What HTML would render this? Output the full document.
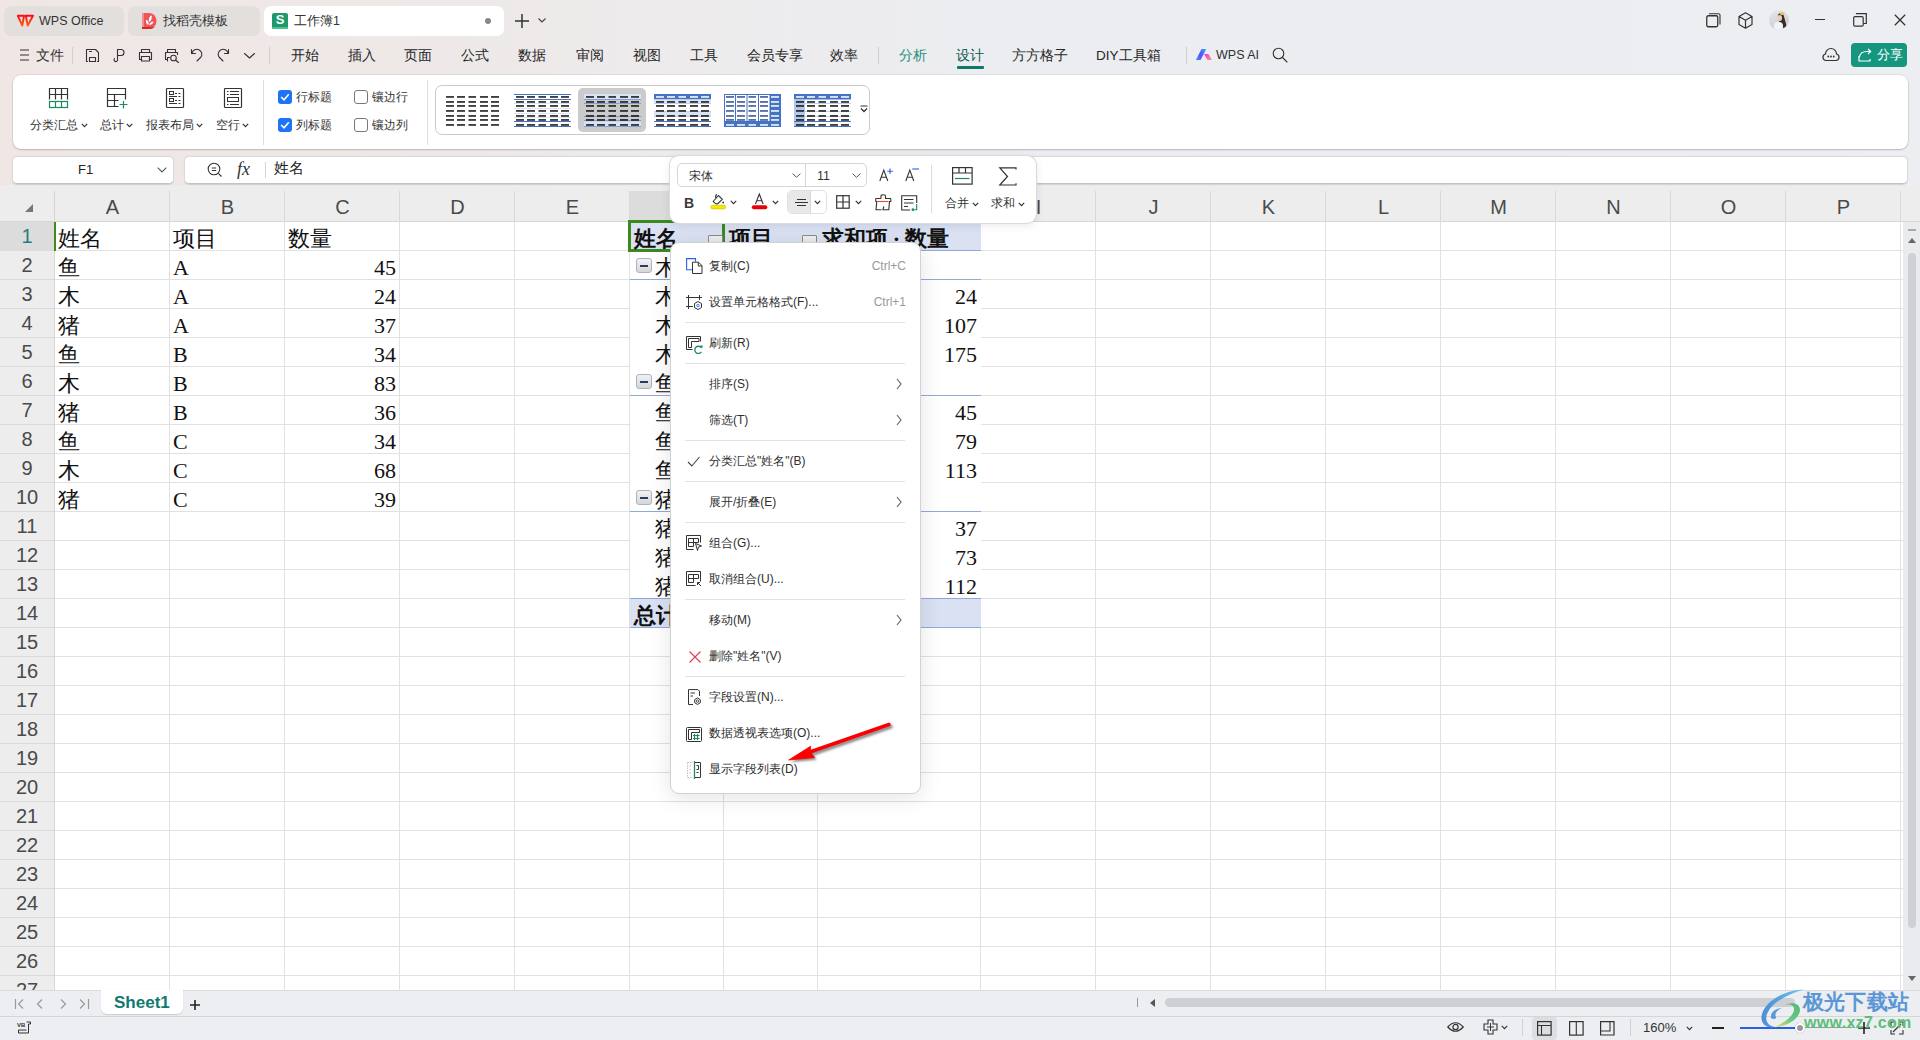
<!DOCTYPE html><html><head><meta charset="utf-8"><style>
*{box-sizing:border-box;margin:0;padding:0}
html,body{width:1920px;height:1040px;overflow:hidden}
body{position:relative;font-family:"Liberation Sans",sans-serif;color:#222;background:#eceef2}
.a{position:absolute}
svg{position:absolute;overflow:visible}
#top{left:0;top:0;width:1920px;height:185px;background:linear-gradient(90deg,#f0e7e5 0%,#eee8e7 20%,#edebec 35%,#ecedf0 50%,#eceef2 100%)}
.tab{position:absolute;top:6px;height:30px;border-radius:7px;background:#e2dfdd}
.tab.act{background:#fff}
.t{position:absolute;white-space:nowrap}
.mi{position:absolute;top:46px;font-size:13.5px;line-height:20px;color:#303030;white-space:nowrap}
#ribbon{left:13px;top:75px;width:1895px;height:74px;background:#fff;border-radius:8px;box-shadow:0 0 0 0.5px rgba(0,0,0,.12),0 1px 2px rgba(0,0,0,.18)}
.rl{position:absolute;font-size:12px;color:#333;white-space:nowrap;line-height:16px}
.box{position:absolute;background:#fff;border:1px solid #dadada;border-bottom-color:#c4c4c4;border-radius:5px;box-shadow:0 0.5px 1px rgba(0,0,0,.12)}
#grid{left:0;top:191px;width:1920px;height:799px;background:#fff;overflow:hidden}
.cell{position:absolute;font-family:"Liberation Serif",serif;font-size:22px;color:#111;line-height:29px;white-space:nowrap;padding-top:2px}
#menu{left:670px;top:242px;width:251px;height:552px;background:#fff;border-radius:9px;box-shadow:0 4px 22px rgba(0,0,0,.11);border:1px solid #d2d2d2}
.cm{position:absolute;left:38px;font-size:12px;color:#2e2e2e;white-space:nowrap;line-height:16px}
.sc{position:absolute;right:14px;font-size:12px;color:#999;white-space:nowrap;line-height:16px}
.sep{position:absolute;left:14px;width:220px;height:1px;background:#e3e3e3}
#ftb{left:670px;top:156px;width:366px;height:67px;background:#fff;border-radius:9px;box-shadow:0 0 0 1px #dadada,0 2px 10px rgba(0,0,0,.10)}
</style></head><body>
<div id="top" class="a"></div><div class="a" style="left:0;top:185px;width:1920px;height:6px;background:#ededed"></div>
<div class="tab" style="left:4px;width:120px"></div><div class="tab" style="left:128px;width:132px"></div><div class="tab act" style="left:264px;width:240px"></div><svg style="left:16px;top:14px" width="19" height="13" viewBox="0 0 19 13"><defs><linearGradient id="wl" x1="0" y1="0" x2="0" y2="1"><stop offset="0" stop-color="#ff0a14"/><stop offset="1" stop-color="#ff5a0a"/></linearGradient></defs><path d="M1.8 1.8H8L6.3 11.6Z M9.8 1.8H17L11.7 11.6Z" fill="none" stroke="url(#wl)" stroke-width="1.9" stroke-linejoin="round"/></svg><div class="t" style="left:39px;top:12px;font-size:12.5px;line-height:18px;color:#333">WPS Office</div><svg style="left:142px;top:13px" width="15" height="16" viewBox="0 0 15 16"><path d="M0 0H7A7.5 8 0 0 1 7 16H0Z" fill="#ef5459"/><rect x="0" y="0" width="2" height="16" fill="#f58a8d"/><path d="M0 14H12.6Q11 16 7 16H0Z" fill="#dc2626"/><ellipse cx="8.3" cy="5.6" rx="1.2" ry="3.3" transform="rotate(15 8.3 5.6)" fill="#fff"/><ellipse cx="5.3" cy="9.4" rx="1.1" ry="2.5" transform="rotate(-20 5.3 9.4)" fill="#fff"/><ellipse cx="9.3" cy="10.3" rx="1" ry="2.4" transform="rotate(55 9.3 10.3)" fill="#fff"/></svg><div class="t" style="left:163px;top:12px;font-size:12.5px;line-height:18px;color:#333">找稻壳模板</div><div class="a" style="left:272px;top:13px;width:16px;height:16px;border-radius:2px;background:#1d9a6c"></div><div class="a" style="left:272px;top:27px;width:16px;height:2px;background:#4cbf8d"></div><div class="t" style="left:272px;top:12px;width:16px;text-align:center;font-size:13px;line-height:16px;color:#fff;font-weight:bold">S</div><div class="t" style="left:294px;top:12px;font-size:12.5px;line-height:18px;color:#333">工作簿1</div><div class="a" style="left:485px;top:18px;width:6px;height:6px;border-radius:3px;background:#888"></div><svg style="left:515px;top:14px" width="14" height="14"><path d="M7 0V14M0 7H14" stroke="#333" stroke-width="1.5"/></svg><svg style="left:538px;top:18px" width="8" height="5"><path d="M0.5 0.5L4 4L7.5 0.5" stroke="#444" stroke-width="1.2" fill="none"/></svg><svg style="left:1706px;top:13px" width="15" height="15"><rect x="0.75" y="2.75" width="11" height="11" rx="1.5" fill="none" stroke="#333" stroke-width="1.3"/><path d="M3 0.75H12.5A1.5 1.5 0 0 1 14 2.25V11.5" fill="none" stroke="#333" stroke-width="1.1"/></svg><svg style="left:1738px;top:12px" width="15" height="17" viewBox="0 0 15 17"><path d="M7.5 0.8L14 4.5V12.5L7.5 16.2L1 12.5V4.5Z M1 4.5L7.5 8.3L14 4.5 M7.5 8.3V16.2" fill="none" stroke="#333" stroke-width="1.2" stroke-linejoin="round"/></svg><div class="a" style="left:1769px;top:10px;width:20px;height:20px;border-radius:10px;overflow:hidden;background:linear-gradient(160deg,#e4e8ea 0%,#cfd6da 60%,#bfc8cc 100%)"><div class="a" style="left:10px;top:3px;width:6px;height:15px;border-radius:3px;background:#3b2b26;transform:rotate(-15deg)"></div><div class="a" style="left:8px;top:5px;width:5px;height:6px;border-radius:3px;background:#e9cdbd"></div><div class="a" style="left:11px;top:2px;width:4px;height:3px;border-radius:2px;background:#e6c25a"></div><div class="a" style="left:5px;top:12px;width:9px;height:9px;border-radius:4px;background:#f1f3f4"></div></div><div class="a" style="left:1815px;top:19px;width:10px;height:1.3px;background:#333"></div><svg style="left:1853px;top:13px" width="14" height="14"><rect x="0.7" y="3.7" width="9.5" height="9.5" rx="1.2" fill="none" stroke="#333" stroke-width="1.2"/><path d="M3.5 1.3V0.7H13.3V10.5H10.5" fill="none" stroke="#333" stroke-width="1.2"/></svg><svg style="left:1894px;top:14px" width="12" height="12"><path d="M0.8 0.8L11.2 11.2M11.2 0.8L0.8 11.2" stroke="#333" stroke-width="1.3"/></svg><svg style="left:20px;top:49px" width="9" height="12"><path d="M0 1H9M0 6H9M0 11H9" stroke="#333" stroke-width="1.2"/></svg><div class="mi" style="left:36px">文件</div><div class="a" style="left:72px;top:47px;width:1px;height:17px;background:#cfcfcf"></div><div class="a" style="left:269px;top:47px;width:1px;height:17px;background:#cfcfcf"></div><div class="a" style="left:878px;top:47px;width:1px;height:17px;background:#cfcfcf"></div><div class="a" style="left:1186px;top:47px;width:1px;height:17px;background:#cfcfcf"></div><svg style="left:85px;top:48px" width="15" height="14" viewBox="0 0 15 14"><path d="M2.5 13.5H1.5V1.5H10.5L13.5 4.5V13.5H12.5" fill="none" stroke="#333" stroke-width="1.1" stroke-linejoin="round" stroke-linecap="round"/><path d="M4.5 3.5H6.5" fill="none" stroke="#333" stroke-width="1.1" stroke-linejoin="round" stroke-linecap="round"/><rect x="4.5" y="9.5" width="6" height="4" fill="none" stroke="#333" stroke-width="1.1" stroke-linejoin="round" stroke-linecap="round"/></svg><svg style="left:112px;top:48px" width="14" height="14" viewBox="0 0 14 14"><path d="M5.5 7.5H9A3 3 0 0 0 9 1.5H5.5V11A1.8 1.8 0 1 1 2.5 10.5" fill="none" stroke="#333" stroke-width="1.1" stroke-linejoin="round" stroke-linecap="round"/></svg><svg style="left:138px;top:48px" width="15" height="14" viewBox="0 0 15 14"><path d="M3.5 4V1.5H11.5V4 M3.5 11.5H1.5V4.5H13.5V11.5H11.5" fill="none" stroke="#333" stroke-width="1.1" stroke-linejoin="round" stroke-linecap="round"/><rect x="3.5" y="8.5" width="8" height="4.5" fill="none" stroke="#333" stroke-width="1.1" stroke-linejoin="round" stroke-linecap="round"/></svg><svg style="left:164px;top:48px" width="16" height="15" viewBox="0 0 16 15"><path d="M3.5 4V1.5H11.5V4 M3 11.5H1.5V4.5H13.5V6.5" fill="none" stroke="#333" stroke-width="1.1" stroke-linejoin="round" stroke-linecap="round"/><path d="M3.5 13V9.5H5.5" fill="none" stroke="#333" stroke-width="1.1" stroke-linejoin="round" stroke-linecap="round"/><circle cx="9.5" cy="10" r="2.8" fill="none" stroke="#333" stroke-width="1.1" stroke-linejoin="round" stroke-linecap="round"/><path d="M11.7 12.2L14.5 14.5" fill="none" stroke="#333" stroke-width="1.1" stroke-linejoin="round" stroke-linecap="round"/></svg><svg style="left:190px;top:48px" width="14" height="14" viewBox="0 0 14 14"><path d="M1.5 1.5V5.5H5.5" fill="none" stroke="#333" stroke-width="1.1" stroke-linejoin="round" stroke-linecap="round"/><path d="M2 5A5 5 0 1 1 11 9L7 13" fill="none" stroke="#333" stroke-width="1.1" stroke-linejoin="round" stroke-linecap="round"/></svg><svg style="left:216px;top:48px" width="14" height="14" viewBox="0 0 14 14"><path d="M12.5 1.5V5.5H8.5" fill="none" stroke="#333" stroke-width="1.1" stroke-linejoin="round" stroke-linecap="round"/><path d="M12 5A5 5 0 1 0 3 9L7 13" fill="none" stroke="#333" stroke-width="1.1" stroke-linejoin="round" stroke-linecap="round"/></svg><svg style="left:244px;top:53px" width="11" height="6"><path d="M0.5 0.5L5.5 5L10.5 0.5" fill="none" stroke="#333" stroke-width="1.1" stroke-linejoin="round" stroke-linecap="round"/></svg><div class="mi" style="left:291px;color:#262626">开始</div><div class="mi" style="left:348px;color:#262626">插入</div><div class="mi" style="left:404px;color:#262626">页面</div><div class="mi" style="left:461px;color:#262626">公式</div><div class="mi" style="left:518px;color:#262626">数据</div><div class="mi" style="left:576px;color:#262626">审阅</div><div class="mi" style="left:633px;color:#262626">视图</div><div class="mi" style="left:690px;color:#262626">工具</div><div class="mi" style="left:747px;color:#262626">会员专享</div><div class="mi" style="left:830px;color:#262626">效率</div><div class="mi" style="left:899px;color:#1d8f7e">分析</div><div class="mi" style="left:956px;color:#0f5e55">设计</div><div class="mi" style="left:1012px;color:#262626">方方格子</div><div class="mi" style="left:1096px;color:#262626">DIY工具箱</div><div class="a" style="left:957px;top:66px;width:27px;height:2.5px;border-radius:1px;background:#0f7a6c"></div><svg style="left:1195px;top:48px" width="18" height="13" viewBox="0 0 18 13"><defs><linearGradient id="ai1" x1="0" y1="1" x2="1" y2="0"><stop offset="0" stop-color="#3d8bff"/><stop offset="0.5" stop-color="#5b4df5"/><stop offset="1" stop-color="#1fb6ff"/></linearGradient><linearGradient id="ai2" x1="0" y1="0" x2="1" y2="1"><stop offset="0" stop-color="#f02cf0"/><stop offset="1" stop-color="#ff9a6a"/></linearGradient></defs><path d="M0.9 12H5.6L11.3 1H6.5Z" fill="url(#ai1)"/><path d="M9 6H13.4L16.9 12H12.5Z" fill="url(#ai2)"/></svg><div class="mi" style="left:1216px;top:45px;font-size:12.5px">WPS AI</div><svg style="left:1272px;top:47px" width="16" height="16" viewBox="0 0 16 16"><circle cx="6.5" cy="6.5" r="5.3" fill="none" stroke="#333" stroke-width="1.1" stroke-linejoin="round" stroke-linecap="round"/><path d="M10.5 10.5L15 15" fill="none" stroke="#333" stroke-width="1.1" stroke-linejoin="round" stroke-linecap="round"/></svg><svg style="left:1822px;top:47px" width="18" height="15" viewBox="0 0 18 15"><path d="M4 13.5H14A3.3 3.3 0 0 0 14.5 7 A5.5 5.5 0 0 0 3.5 7 A3.3 3.3 0 0 0 4 13.5Z" fill="none" stroke="#333" stroke-width="1.2"/><circle cx="6.3" cy="9.5" r="0.9" fill="#333"/><circle cx="9" cy="9.5" r="0.9" fill="#333"/><circle cx="11.7" cy="9.5" r="0.9" fill="#333"/></svg><div class="a" style="left:1851px;top:43px;width:56px;height:24px;border-radius:4px;background:#15977f"></div><svg style="left:1858px;top:48px" width="14" height="14" viewBox="0 0 14 14"><path d="M1 8V13H12V11" fill="none" stroke="#fff" stroke-width="1.2"/><path d="M1.5 9C2 5 5 3.5 9 3.5H12.5 M10 1L12.7 3.5L10 6" fill="none" stroke="#fff" stroke-width="1.2"/></svg><div class="t" style="left:1877px;top:46px;font-size:13px;line-height:18px;color:#fff">分享</div>
<div id="ribbon" class="a"></div><svg style="left:49px;top:88px" width="20" height="20" viewBox="0 0 20 20"><path d="M0.5 11.5V0.5H18.5V11.5 M6.5 0.5V11.5 M12.5 0.5V11.5 M0.5 6.5H18.5" fill="none" stroke="#333" stroke-width="1.2"/><rect x="0.5" y="13.5" width="18" height="6" fill="none" stroke="#1a8a5a" stroke-width="1.2"/><path d="M6.5 13.5V19.5M12.5 13.5V19.5" fill="none" stroke="#1a8a5a" stroke-width="1.2"/></svg><svg style="left:107px;top:88px" width="21" height="21" viewBox="0 0 21 21"><path d="M11.5 18.5H0.5V0.5H18.5V11.5 M0.5 6.5H18.5 M0.5 12.5H11.5 M7.5 6.5V18.5" fill="none" stroke="#333" stroke-width="1.2"/><path d="M16.5 13V20.5M12.5 16.5H20.5" fill="none" stroke="#1a8a5a" stroke-width="1.2"/></svg><svg style="left:166px;top:88px" width="18" height="20" viewBox="0 0 18 20"><rect x="0.5" y="0.5" width="17" height="19" rx="0.8" fill="none" stroke="#333" stroke-width="1.2"/><rect x="3.5" y="3.5" width="4" height="3" fill="none" stroke="#333" stroke-width="1"/><rect x="3.5" y="10.5" width="4" height="3" fill="none" stroke="#333" stroke-width="1"/><path d="M9 5.5H11M12.5 5.5H14.5M3 8.5H11M12.5 8.5H14.5M9 12.5H11M12.5 12.5H14.5M3 15.5H11M12.5 15.5H14.5" stroke="#333" stroke-width="1"/></svg><svg style="left:224px;top:88px" width="18" height="20" viewBox="0 0 18 20"><rect x="0.5" y="0.5" width="17" height="19" rx="0.8" fill="none" stroke="#333" stroke-width="1.2"/><path d="M3 3.5H4.5M6 3.5H15M3 6.5H4.5M6 6.5H15M3 16.5H4.5M6 16.5H15" stroke="#333" stroke-width="1"/><rect x="3.5" y="9.5" width="11" height="4" fill="none" stroke="#333" stroke-width="1"/></svg><div class="rl" style="left:30px;top:117px">分类汇总</div><svg style="left:81px;top:123px" width="7" height="5"><path d="M0.8 0.8L3.5 3.6L6.2 0.8" fill="none" stroke="#333" stroke-width="1.2"/></svg><div class="rl" style="left:100px;top:117px">总计</div><svg style="left:126px;top:123px" width="7" height="5"><path d="M0.8 0.8L3.5 3.6L6.2 0.8" fill="none" stroke="#333" stroke-width="1.2"/></svg><div class="rl" style="left:146px;top:117px">报表布局</div><svg style="left:196px;top:123px" width="7" height="5"><path d="M0.8 0.8L3.5 3.6L6.2 0.8" fill="none" stroke="#333" stroke-width="1.2"/></svg><div class="rl" style="left:216px;top:117px">空行</div><svg style="left:242px;top:123px" width="7" height="5"><path d="M0.8 0.8L3.5 3.6L6.2 0.8" fill="none" stroke="#333" stroke-width="1.2"/></svg><div class="a" style="left:263px;top:80px;width:1px;height:65px;background:#dedede"></div><div class="a" style="left:427px;top:80px;width:1px;height:65px;background:#dedede"></div><div class="a" style="left:278px;top:90px;width:14px;height:14px;border-radius:3px;background:#1f73f5"></div><svg style="left:278px;top:90px" width="14" height="14"><path d="M3.2 7L6 9.8L10.8 4.3" fill="none" stroke="#fff" stroke-width="1.6"/></svg><div class="rl" style="left:296px;top:89px">行标题</div><div class="a" style="left:278px;top:118px;width:14px;height:14px;border-radius:3px;background:#1f73f5"></div><svg style="left:278px;top:118px" width="14" height="14"><path d="M3.2 7L6 9.8L10.8 4.3" fill="none" stroke="#fff" stroke-width="1.6"/></svg><div class="rl" style="left:296px;top:117px">列标题</div><div class="a" style="left:354px;top:90px;width:14px;height:14px;border-radius:3px;border:1px solid #777;background:#fff"></div><div class="rl" style="left:372px;top:89px">镶边行</div><div class="a" style="left:354px;top:118px;width:14px;height:14px;border-radius:3px;border:1px solid #777;background:#fff"></div><div class="rl" style="left:372px;top:117px">镶边列</div><div class="a" style="left:435px;top:85px;width:435px;height:50px;border:1px solid #c9c9c9;border-radius:7px"></div><div class="a" style="left:578px;top:88px;width:68px;height:44px;border-radius:5px;background:#cbcbcb"></div><svg style="left:444px;top:94px" width="58" height="34" viewBox="0 0 58 34"><rect x="2.0" y="2.2" width="8.0" height="1.5" fill="#111"/><rect x="13.0" y="2.2" width="8.0" height="1.5" fill="#111"/><rect x="24.5" y="2.2" width="7.5" height="1.5" fill="#111"/><rect x="36.0" y="2.2" width="8.0" height="1.5" fill="#111"/><rect x="47.0" y="2.2" width="8.0" height="1.5" fill="#111"/><rect x="2.0" y="7.2" width="8.0" height="1.5" fill="#111"/><rect x="13.0" y="7.2" width="8.0" height="1.5" fill="#111"/><rect x="24.5" y="7.2" width="7.5" height="1.5" fill="#111"/><rect x="36.0" y="7.2" width="8.0" height="1.5" fill="#111"/><rect x="47.0" y="7.2" width="8.0" height="1.5" fill="#111"/><rect x="2.0" y="11.2" width="8.0" height="1.5" fill="#111"/><rect x="13.0" y="11.2" width="8.0" height="1.5" fill="#111"/><rect x="24.5" y="11.2" width="7.5" height="1.5" fill="#111"/><rect x="36.0" y="11.2" width="8.0" height="1.5" fill="#111"/><rect x="47.0" y="11.2" width="8.0" height="1.5" fill="#111"/><rect x="2.0" y="16.2" width="8.0" height="1.5" fill="#111"/><rect x="13.0" y="16.2" width="8.0" height="1.5" fill="#111"/><rect x="24.5" y="16.2" width="7.5" height="1.5" fill="#111"/><rect x="36.0" y="16.2" width="8.0" height="1.5" fill="#111"/><rect x="47.0" y="16.2" width="8.0" height="1.5" fill="#111"/><rect x="2.0" y="21.2" width="8.0" height="1.5" fill="#111"/><rect x="13.0" y="21.2" width="8.0" height="1.5" fill="#111"/><rect x="24.5" y="21.2" width="7.5" height="1.5" fill="#111"/><rect x="36.0" y="21.2" width="8.0" height="1.5" fill="#111"/><rect x="47.0" y="21.2" width="8.0" height="1.5" fill="#111"/><rect x="2.0" y="25.2" width="8.0" height="1.5" fill="#111"/><rect x="13.0" y="25.2" width="8.0" height="1.5" fill="#111"/><rect x="24.5" y="25.2" width="7.5" height="1.5" fill="#111"/><rect x="36.0" y="25.2" width="8.0" height="1.5" fill="#111"/><rect x="47.0" y="25.2" width="8.0" height="1.5" fill="#111"/><rect x="2.0" y="30.2" width="8.0" height="1.5" fill="#111"/><rect x="13.0" y="30.2" width="8.0" height="1.5" fill="#111"/><rect x="24.5" y="30.2" width="7.5" height="1.5" fill="#111"/><rect x="36.0" y="30.2" width="8.0" height="1.5" fill="#111"/><rect x="47.0" y="30.2" width="8.0" height="1.5" fill="#111"/></svg><svg style="left:514px;top:94px" width="58" height="34" viewBox="0 0 58 34"><rect x="0" y="9.0" width="57" height="1" fill="#dae3f3"/><rect x="0" y="14.0" width="57" height="1" fill="#dae3f3"/><rect x="0" y="19.0" width="57" height="1" fill="#dae3f3"/><rect x="0" y="23.0" width="57" height="1" fill="#dae3f3"/><rect x="0" y="0.0" width="57" height="1" fill="#4472c4"/><rect x="0" y="5.0" width="57" height="1" fill="#4472c4"/><rect x="0" y="27.0" width="57" height="1" fill="#4472c4"/><rect x="0" y="32.0" width="57" height="1" fill="#4472c4"/><rect x="2.0" y="2.2" width="8.0" height="1.5" fill="#111"/><rect x="13.0" y="2.2" width="8.0" height="1.5" fill="#111"/><rect x="24.5" y="2.2" width="7.5" height="1.5" fill="#111"/><rect x="36.0" y="2.2" width="8.0" height="1.5" fill="#111"/><rect x="47.0" y="2.2" width="8.0" height="1.5" fill="#111"/><rect x="2.0" y="7.2" width="8.0" height="1.5" fill="#111"/><rect x="13.0" y="7.2" width="8.0" height="1.5" fill="#111"/><rect x="24.5" y="7.2" width="7.5" height="1.5" fill="#111"/><rect x="36.0" y="7.2" width="8.0" height="1.5" fill="#111"/><rect x="47.0" y="7.2" width="8.0" height="1.5" fill="#111"/><rect x="2.0" y="11.2" width="8.0" height="1.5" fill="#111"/><rect x="13.0" y="11.2" width="8.0" height="1.5" fill="#111"/><rect x="24.5" y="11.2" width="7.5" height="1.5" fill="#111"/><rect x="36.0" y="11.2" width="8.0" height="1.5" fill="#111"/><rect x="47.0" y="11.2" width="8.0" height="1.5" fill="#111"/><rect x="2.0" y="16.2" width="8.0" height="1.5" fill="#111"/><rect x="13.0" y="16.2" width="8.0" height="1.5" fill="#111"/><rect x="24.5" y="16.2" width="7.5" height="1.5" fill="#111"/><rect x="36.0" y="16.2" width="8.0" height="1.5" fill="#111"/><rect x="47.0" y="16.2" width="8.0" height="1.5" fill="#111"/><rect x="2.0" y="21.2" width="8.0" height="1.5" fill="#111"/><rect x="13.0" y="21.2" width="8.0" height="1.5" fill="#111"/><rect x="24.5" y="21.2" width="7.5" height="1.5" fill="#111"/><rect x="36.0" y="21.2" width="8.0" height="1.5" fill="#111"/><rect x="47.0" y="21.2" width="8.0" height="1.5" fill="#111"/><rect x="2.0" y="25.2" width="8.0" height="1.5" fill="#111"/><rect x="13.0" y="25.2" width="8.0" height="1.5" fill="#111"/><rect x="24.5" y="25.2" width="7.5" height="1.5" fill="#111"/><rect x="36.0" y="25.2" width="8.0" height="1.5" fill="#111"/><rect x="47.0" y="25.2" width="8.0" height="1.5" fill="#111"/><rect x="2.0" y="30.2" width="8.0" height="1.5" fill="#111"/><rect x="13.0" y="30.2" width="8.0" height="1.5" fill="#111"/><rect x="24.5" y="30.2" width="7.5" height="1.5" fill="#111"/><rect x="36.0" y="30.2" width="8.0" height="1.5" fill="#111"/><rect x="47.0" y="30.2" width="8.0" height="1.5" fill="#111"/></svg><svg style="left:584px;top:94px" width="58" height="34" viewBox="0 0 58 34"><rect x="0" y="0" width="57" height="5" fill="#dae3f3"/><rect x="0" y="27.5" width="57" height="5" fill="#dae3f3"/><rect x="0" y="5.0" width="57" height="1" fill="#7f9fd8"/><rect x="0" y="9.0" width="57" height="1" fill="#7f9fd8"/><rect x="0" y="22.0" width="57" height="1" fill="#7f9fd8"/><rect x="0" y="26.0" width="57" height="1" fill="#7f9fd8"/><rect x="0" y="32.0" width="57" height="1" fill="#7f9fd8"/><rect x="2.0" y="2.2" width="8.0" height="1.5" fill="#111"/><rect x="13.0" y="2.2" width="8.0" height="1.5" fill="#111"/><rect x="24.5" y="2.2" width="7.5" height="1.5" fill="#111"/><rect x="36.0" y="2.2" width="8.0" height="1.5" fill="#111"/><rect x="47.0" y="2.2" width="8.0" height="1.5" fill="#111"/><rect x="2.0" y="7.2" width="8.0" height="1.5" fill="#111"/><rect x="13.0" y="7.2" width="8.0" height="1.5" fill="#111"/><rect x="24.5" y="7.2" width="7.5" height="1.5" fill="#111"/><rect x="36.0" y="7.2" width="8.0" height="1.5" fill="#111"/><rect x="47.0" y="7.2" width="8.0" height="1.5" fill="#111"/><rect x="2.0" y="11.2" width="8.0" height="1.5" fill="#111"/><rect x="13.0" y="11.2" width="8.0" height="1.5" fill="#111"/><rect x="24.5" y="11.2" width="7.5" height="1.5" fill="#111"/><rect x="36.0" y="11.2" width="8.0" height="1.5" fill="#111"/><rect x="47.0" y="11.2" width="8.0" height="1.5" fill="#111"/><rect x="2.0" y="16.2" width="8.0" height="1.5" fill="#111"/><rect x="13.0" y="16.2" width="8.0" height="1.5" fill="#111"/><rect x="24.5" y="16.2" width="7.5" height="1.5" fill="#111"/><rect x="36.0" y="16.2" width="8.0" height="1.5" fill="#111"/><rect x="47.0" y="16.2" width="8.0" height="1.5" fill="#111"/><rect x="2.0" y="21.2" width="8.0" height="1.5" fill="#111"/><rect x="13.0" y="21.2" width="8.0" height="1.5" fill="#111"/><rect x="24.5" y="21.2" width="7.5" height="1.5" fill="#111"/><rect x="36.0" y="21.2" width="8.0" height="1.5" fill="#111"/><rect x="47.0" y="21.2" width="8.0" height="1.5" fill="#111"/><rect x="2.0" y="25.2" width="8.0" height="1.5" fill="#111"/><rect x="13.0" y="25.2" width="8.0" height="1.5" fill="#111"/><rect x="24.5" y="25.2" width="7.5" height="1.5" fill="#111"/><rect x="36.0" y="25.2" width="8.0" height="1.5" fill="#111"/><rect x="47.0" y="25.2" width="8.0" height="1.5" fill="#111"/><rect x="2.0" y="30.2" width="8.0" height="1.5" fill="#111"/><rect x="13.0" y="30.2" width="8.0" height="1.5" fill="#111"/><rect x="24.5" y="30.2" width="7.5" height="1.5" fill="#111"/><rect x="36.0" y="30.2" width="8.0" height="1.5" fill="#111"/><rect x="47.0" y="30.2" width="8.0" height="1.5" fill="#111"/></svg><svg style="left:654px;top:94px" width="58" height="34" viewBox="0 0 58 34"><rect x="0" y="0" width="57" height="5.5" fill="#4472c4"/><rect x="0" y="5.5" width="57" height="4" fill="#dae3f3"/><rect x="0" y="18" width="57" height="4.5" fill="#dae3f3"/><rect x="0" y="9.0" width="57" height="0.8" fill="#b4c6e7"/><rect x="0" y="17.0" width="57" height="0.8" fill="#b4c6e7"/><rect x="0" y="22.0" width="57" height="0.8" fill="#b4c6e7"/><rect x="0" y="27.0" width="57" height="1" fill="#4472c4"/><rect x="0" y="32.0" width="57" height="1" fill="#4472c4"/><rect x="2.0" y="2.2" width="8.0" height="1.5" fill="#fff"/><rect x="13.0" y="2.2" width="8.0" height="1.5" fill="#fff"/><rect x="24.5" y="2.2" width="7.5" height="1.5" fill="#fff"/><rect x="36.0" y="2.2" width="8.0" height="1.5" fill="#fff"/><rect x="47.0" y="2.2" width="8.0" height="1.5" fill="#fff"/><rect x="2.0" y="7.2" width="8.0" height="1.5" fill="#111"/><rect x="13.0" y="7.2" width="8.0" height="1.5" fill="#111"/><rect x="24.5" y="7.2" width="7.5" height="1.5" fill="#111"/><rect x="36.0" y="7.2" width="8.0" height="1.5" fill="#111"/><rect x="47.0" y="7.2" width="8.0" height="1.5" fill="#111"/><rect x="2.0" y="11.2" width="8.0" height="1.5" fill="#111"/><rect x="13.0" y="11.2" width="8.0" height="1.5" fill="#111"/><rect x="24.5" y="11.2" width="7.5" height="1.5" fill="#111"/><rect x="36.0" y="11.2" width="8.0" height="1.5" fill="#111"/><rect x="47.0" y="11.2" width="8.0" height="1.5" fill="#111"/><rect x="2.0" y="16.2" width="8.0" height="1.5" fill="#111"/><rect x="13.0" y="16.2" width="8.0" height="1.5" fill="#111"/><rect x="24.5" y="16.2" width="7.5" height="1.5" fill="#111"/><rect x="36.0" y="16.2" width="8.0" height="1.5" fill="#111"/><rect x="47.0" y="16.2" width="8.0" height="1.5" fill="#111"/><rect x="2.0" y="21.2" width="8.0" height="1.5" fill="#111"/><rect x="13.0" y="21.2" width="8.0" height="1.5" fill="#111"/><rect x="24.5" y="21.2" width="7.5" height="1.5" fill="#111"/><rect x="36.0" y="21.2" width="8.0" height="1.5" fill="#111"/><rect x="47.0" y="21.2" width="8.0" height="1.5" fill="#111"/><rect x="2.0" y="25.2" width="8.0" height="1.5" fill="#111"/><rect x="13.0" y="25.2" width="8.0" height="1.5" fill="#111"/><rect x="24.5" y="25.2" width="7.5" height="1.5" fill="#111"/><rect x="36.0" y="25.2" width="8.0" height="1.5" fill="#111"/><rect x="47.0" y="25.2" width="8.0" height="1.5" fill="#111"/><rect x="2.0" y="30.2" width="8.0" height="1.5" fill="#111"/><rect x="13.0" y="30.2" width="8.0" height="1.5" fill="#111"/><rect x="24.5" y="30.2" width="7.5" height="1.5" fill="#111"/><rect x="36.0" y="30.2" width="8.0" height="1.5" fill="#111"/><rect x="47.0" y="30.2" width="8.0" height="1.5" fill="#111"/></svg><svg style="left:724px;top:94px" width="58" height="34" viewBox="0 0 58 34"><rect x="0" y="0" width="57" height="33" fill="#4472c4"/><rect x="1.0" y="1" width="10.0" height="26" fill="#fff"/><rect x="12.0" y="1" width="10.5" height="26" fill="#fff"/><rect x="23.5" y="1" width="10.5" height="26" fill="#fff"/><rect x="35.0" y="1" width="10.5" height="26" fill="#fff"/><rect x="2.0" y="2.2" width="8.0" height="1.5" fill="#2f4f8f"/><rect x="13.0" y="2.2" width="8.0" height="1.5" fill="#2f4f8f"/><rect x="24.5" y="2.2" width="7.5" height="1.5" fill="#2f4f8f"/><rect x="36.0" y="2.2" width="8.0" height="1.5" fill="#2f4f8f"/><rect x="2.0" y="7.2" width="8.0" height="1.5" fill="#2f4f8f"/><rect x="13.0" y="7.2" width="8.0" height="1.5" fill="#2f4f8f"/><rect x="24.5" y="7.2" width="7.5" height="1.5" fill="#2f4f8f"/><rect x="36.0" y="7.2" width="8.0" height="1.5" fill="#2f4f8f"/><rect x="2.0" y="11.2" width="8.0" height="1.5" fill="#2f4f8f"/><rect x="13.0" y="11.2" width="8.0" height="1.5" fill="#2f4f8f"/><rect x="24.5" y="11.2" width="7.5" height="1.5" fill="#2f4f8f"/><rect x="36.0" y="11.2" width="8.0" height="1.5" fill="#2f4f8f"/><rect x="2.0" y="16.2" width="8.0" height="1.5" fill="#2f4f8f"/><rect x="13.0" y="16.2" width="8.0" height="1.5" fill="#2f4f8f"/><rect x="24.5" y="16.2" width="7.5" height="1.5" fill="#2f4f8f"/><rect x="36.0" y="16.2" width="8.0" height="1.5" fill="#2f4f8f"/><rect x="2.0" y="21.2" width="8.0" height="1.5" fill="#2f4f8f"/><rect x="13.0" y="21.2" width="8.0" height="1.5" fill="#2f4f8f"/><rect x="24.5" y="21.2" width="7.5" height="1.5" fill="#2f4f8f"/><rect x="36.0" y="21.2" width="8.0" height="1.5" fill="#2f4f8f"/><rect x="2.0" y="25.2" width="8.0" height="1.5" fill="#2f4f8f"/><rect x="13.0" y="25.2" width="8.0" height="1.5" fill="#2f4f8f"/><rect x="24.5" y="25.2" width="7.5" height="1.5" fill="#2f4f8f"/><rect x="36.0" y="25.2" width="8.0" height="1.5" fill="#2f4f8f"/><rect x="47.0" y="2.2" width="8.0" height="1.5" fill="#fff"/><rect x="47.0" y="7.2" width="8.0" height="1.5" fill="#fff"/><rect x="47.0" y="11.2" width="8.0" height="1.5" fill="#fff"/><rect x="47.0" y="16.2" width="8.0" height="1.5" fill="#fff"/><rect x="47.0" y="21.2" width="8.0" height="1.5" fill="#fff"/><rect x="47.0" y="25.2" width="8.0" height="1.5" fill="#fff"/><rect x="2.0" y="30.2" width="8.0" height="1.5" fill="#fff"/><rect x="13.0" y="30.2" width="8.0" height="1.5" fill="#fff"/><rect x="24.5" y="30.2" width="7.5" height="1.5" fill="#fff"/><rect x="36.0" y="30.2" width="8.0" height="1.5" fill="#fff"/><rect x="47.0" y="30.2" width="8.0" height="1.5" fill="#fff"/></svg><svg style="left:794px;top:94px" width="58" height="34" viewBox="0 0 58 34"><rect x="0" y="0" width="57" height="5.5" fill="#4472c4"/><rect x="0" y="5.5" width="11" height="27" fill="#b4c6e7"/><rect x="0" y="9.0" width="57" height="0.8" fill="#b4c6e7"/><rect x="0" y="17.0" width="57" height="0.8" fill="#b4c6e7"/><rect x="0" y="22.0" width="57" height="0.8" fill="#b4c6e7"/><rect x="0" y="27.0" width="57" height="1" fill="#4472c4"/><rect x="0" y="32.0" width="57" height="1" fill="#4472c4"/><rect x="2.0" y="2.2" width="8.0" height="1.5" fill="#fff"/><rect x="13.0" y="2.2" width="8.0" height="1.5" fill="#fff"/><rect x="24.5" y="2.2" width="7.5" height="1.5" fill="#fff"/><rect x="36.0" y="2.2" width="8.0" height="1.5" fill="#fff"/><rect x="47.0" y="2.2" width="8.0" height="1.5" fill="#fff"/><rect x="2.0" y="7.2" width="8.0" height="1.5" fill="#111"/><rect x="13.0" y="7.2" width="8.0" height="1.5" fill="#111"/><rect x="24.5" y="7.2" width="7.5" height="1.5" fill="#111"/><rect x="36.0" y="7.2" width="8.0" height="1.5" fill="#111"/><rect x="47.0" y="7.2" width="8.0" height="1.5" fill="#111"/><rect x="2.0" y="11.2" width="8.0" height="1.5" fill="#111"/><rect x="13.0" y="11.2" width="8.0" height="1.5" fill="#111"/><rect x="24.5" y="11.2" width="7.5" height="1.5" fill="#111"/><rect x="36.0" y="11.2" width="8.0" height="1.5" fill="#111"/><rect x="47.0" y="11.2" width="8.0" height="1.5" fill="#111"/><rect x="2.0" y="16.2" width="8.0" height="1.5" fill="#111"/><rect x="13.0" y="16.2" width="8.0" height="1.5" fill="#111"/><rect x="24.5" y="16.2" width="7.5" height="1.5" fill="#111"/><rect x="36.0" y="16.2" width="8.0" height="1.5" fill="#111"/><rect x="47.0" y="16.2" width="8.0" height="1.5" fill="#111"/><rect x="2.0" y="21.2" width="8.0" height="1.5" fill="#111"/><rect x="13.0" y="21.2" width="8.0" height="1.5" fill="#111"/><rect x="24.5" y="21.2" width="7.5" height="1.5" fill="#111"/><rect x="36.0" y="21.2" width="8.0" height="1.5" fill="#111"/><rect x="47.0" y="21.2" width="8.0" height="1.5" fill="#111"/><rect x="2.0" y="25.2" width="8.0" height="1.5" fill="#111"/><rect x="13.0" y="25.2" width="8.0" height="1.5" fill="#111"/><rect x="24.5" y="25.2" width="7.5" height="1.5" fill="#111"/><rect x="36.0" y="25.2" width="8.0" height="1.5" fill="#111"/><rect x="47.0" y="25.2" width="8.0" height="1.5" fill="#111"/><rect x="2.0" y="30.2" width="8.0" height="1.5" fill="#111"/><rect x="13.0" y="30.2" width="8.0" height="1.5" fill="#111"/><rect x="24.5" y="30.2" width="7.5" height="1.5" fill="#111"/><rect x="36.0" y="30.2" width="8.0" height="1.5" fill="#111"/><rect x="47.0" y="30.2" width="8.0" height="1.5" fill="#111"/></svg><svg style="left:860px;top:105px" width="8" height="8"><path d="M0.5 1H7.5" stroke="#333" stroke-width="1"/><path d="M1 3.5L4 6.5L7 3.5" fill="none" stroke="#333" stroke-width="1.3"/></svg><div class="box" style="left:12px;top:156px;width:162px;height:28px"></div><div class="t" style="left:78px;top:162px;font-size:13px;line-height:16px;color:#222">F1</div><svg style="left:157px;top:167px" width="10" height="6"><path d="M0.7 0.7L5 5L9.3 0.7" fill="none" stroke="#555" stroke-width="1.1"/></svg><div class="box" style="left:184px;top:156px;width:1724px;height:28px"></div><svg style="left:207px;top:162px" width="16" height="16" viewBox="0 0 16 16"><circle cx="7" cy="7" r="5.8" fill="none" stroke="#333" stroke-width="1.1"/><path d="M4.8 6H9.2M4.8 8.5H9.2M11.3 11.3L14.5 14.5" stroke="#333" stroke-width="1.1"/></svg><div class="t" style="left:237px;top:159px;font-family:'Liberation Serif',serif;font-style:italic;font-size:18px;line-height:20px;color:#333">fx</div><div class="a" style="left:265px;top:162px;width:1px;height:16px;background:#d5d5d5"></div><div class="t" style="left:274px;top:158px;font-size:15px;line-height:20px;color:#222">姓名</div>
<div id="grid" class="a"><div class="a" style="left:0;top:0;width:1920px;height:31px;background:#ededed"></div><div class="a" style="left:0;top:30px;width:1920px;height:1px;background:#d6d6d6"></div><div class="a" style="left:0;top:31px;width:55px;height:768px;background:#ededed"></div><div class="a" style="left:54px;top:0;width:1px;height:799px;background:#d6d6d6"></div><div class="a" style="left:0;top:31px;width:54px;height:29px;background:#dcdcdc"></div><div class="a" style="left:630px;top:0;width:93px;height:30px;background:#dcdcdc"></div><div class="a" style="left:169px;top:0;width:1px;height:31px;background:#d9d9d9"></div><div class="a" style="left:169px;top:31px;width:1px;height:768px;background:#e1e1e1"></div><div class="a" style="left:284px;top:0;width:1px;height:31px;background:#d9d9d9"></div><div class="a" style="left:284px;top:31px;width:1px;height:768px;background:#e1e1e1"></div><div class="a" style="left:399px;top:0;width:1px;height:31px;background:#d9d9d9"></div><div class="a" style="left:399px;top:31px;width:1px;height:768px;background:#e1e1e1"></div><div class="a" style="left:514px;top:0;width:1px;height:31px;background:#d9d9d9"></div><div class="a" style="left:514px;top:31px;width:1px;height:768px;background:#e1e1e1"></div><div class="a" style="left:629px;top:0;width:1px;height:31px;background:#d9d9d9"></div><div class="a" style="left:629px;top:31px;width:1px;height:768px;background:#e1e1e1"></div><div class="a" style="left:723px;top:0;width:1px;height:31px;background:#d9d9d9"></div><div class="a" style="left:723px;top:31px;width:1px;height:768px;background:#e1e1e1"></div><div class="a" style="left:817px;top:0;width:1px;height:31px;background:#d9d9d9"></div><div class="a" style="left:817px;top:31px;width:1px;height:768px;background:#e1e1e1"></div><div class="a" style="left:980px;top:0;width:1px;height:31px;background:#d9d9d9"></div><div class="a" style="left:980px;top:31px;width:1px;height:768px;background:#e1e1e1"></div><div class="a" style="left:1095px;top:0;width:1px;height:31px;background:#d9d9d9"></div><div class="a" style="left:1095px;top:31px;width:1px;height:768px;background:#e1e1e1"></div><div class="a" style="left:1210px;top:0;width:1px;height:31px;background:#d9d9d9"></div><div class="a" style="left:1210px;top:31px;width:1px;height:768px;background:#e1e1e1"></div><div class="a" style="left:1325px;top:0;width:1px;height:31px;background:#d9d9d9"></div><div class="a" style="left:1325px;top:31px;width:1px;height:768px;background:#e1e1e1"></div><div class="a" style="left:1440px;top:0;width:1px;height:31px;background:#d9d9d9"></div><div class="a" style="left:1440px;top:31px;width:1px;height:768px;background:#e1e1e1"></div><div class="a" style="left:1555px;top:0;width:1px;height:31px;background:#d9d9d9"></div><div class="a" style="left:1555px;top:31px;width:1px;height:768px;background:#e1e1e1"></div><div class="a" style="left:1670px;top:0;width:1px;height:31px;background:#d9d9d9"></div><div class="a" style="left:1670px;top:31px;width:1px;height:768px;background:#e1e1e1"></div><div class="a" style="left:1785px;top:0;width:1px;height:31px;background:#d9d9d9"></div><div class="a" style="left:1785px;top:31px;width:1px;height:768px;background:#e1e1e1"></div><div class="a" style="left:1900px;top:0;width:1px;height:31px;background:#d9d9d9"></div><div class="a" style="left:1900px;top:31px;width:1px;height:768px;background:#e1e1e1"></div><div class="a" style="left:55px;top:59px;width:1848px;height:1px;background:#e1e1e1"></div><div class="a" style="left:0;top:59px;width:54px;height:1px;background:#dadada"></div><div class="a" style="left:55px;top:88px;width:1848px;height:1px;background:#e1e1e1"></div><div class="a" style="left:0;top:88px;width:54px;height:1px;background:#dadada"></div><div class="a" style="left:55px;top:117px;width:1848px;height:1px;background:#e1e1e1"></div><div class="a" style="left:0;top:117px;width:54px;height:1px;background:#dadada"></div><div class="a" style="left:55px;top:146px;width:1848px;height:1px;background:#e1e1e1"></div><div class="a" style="left:0;top:146px;width:54px;height:1px;background:#dadada"></div><div class="a" style="left:55px;top:175px;width:1848px;height:1px;background:#e1e1e1"></div><div class="a" style="left:0;top:175px;width:54px;height:1px;background:#dadada"></div><div class="a" style="left:55px;top:204px;width:1848px;height:1px;background:#e1e1e1"></div><div class="a" style="left:0;top:204px;width:54px;height:1px;background:#dadada"></div><div class="a" style="left:55px;top:233px;width:1848px;height:1px;background:#e1e1e1"></div><div class="a" style="left:0;top:233px;width:54px;height:1px;background:#dadada"></div><div class="a" style="left:55px;top:262px;width:1848px;height:1px;background:#e1e1e1"></div><div class="a" style="left:0;top:262px;width:54px;height:1px;background:#dadada"></div><div class="a" style="left:55px;top:291px;width:1848px;height:1px;background:#e1e1e1"></div><div class="a" style="left:0;top:291px;width:54px;height:1px;background:#dadada"></div><div class="a" style="left:55px;top:320px;width:1848px;height:1px;background:#e1e1e1"></div><div class="a" style="left:0;top:320px;width:54px;height:1px;background:#dadada"></div><div class="a" style="left:55px;top:349px;width:1848px;height:1px;background:#e1e1e1"></div><div class="a" style="left:0;top:349px;width:54px;height:1px;background:#dadada"></div><div class="a" style="left:55px;top:378px;width:1848px;height:1px;background:#e1e1e1"></div><div class="a" style="left:0;top:378px;width:54px;height:1px;background:#dadada"></div><div class="a" style="left:55px;top:407px;width:1848px;height:1px;background:#e1e1e1"></div><div class="a" style="left:0;top:407px;width:54px;height:1px;background:#dadada"></div><div class="a" style="left:55px;top:436px;width:1848px;height:1px;background:#e1e1e1"></div><div class="a" style="left:0;top:436px;width:54px;height:1px;background:#dadada"></div><div class="a" style="left:55px;top:465px;width:1848px;height:1px;background:#e1e1e1"></div><div class="a" style="left:0;top:465px;width:54px;height:1px;background:#dadada"></div><div class="a" style="left:55px;top:494px;width:1848px;height:1px;background:#e1e1e1"></div><div class="a" style="left:0;top:494px;width:54px;height:1px;background:#dadada"></div><div class="a" style="left:55px;top:523px;width:1848px;height:1px;background:#e1e1e1"></div><div class="a" style="left:0;top:523px;width:54px;height:1px;background:#dadada"></div><div class="a" style="left:55px;top:552px;width:1848px;height:1px;background:#e1e1e1"></div><div class="a" style="left:0;top:552px;width:54px;height:1px;background:#dadada"></div><div class="a" style="left:55px;top:581px;width:1848px;height:1px;background:#e1e1e1"></div><div class="a" style="left:0;top:581px;width:54px;height:1px;background:#dadada"></div><div class="a" style="left:55px;top:610px;width:1848px;height:1px;background:#e1e1e1"></div><div class="a" style="left:0;top:610px;width:54px;height:1px;background:#dadada"></div><div class="a" style="left:55px;top:639px;width:1848px;height:1px;background:#e1e1e1"></div><div class="a" style="left:0;top:639px;width:54px;height:1px;background:#dadada"></div><div class="a" style="left:55px;top:668px;width:1848px;height:1px;background:#e1e1e1"></div><div class="a" style="left:0;top:668px;width:54px;height:1px;background:#dadada"></div><div class="a" style="left:55px;top:697px;width:1848px;height:1px;background:#e1e1e1"></div><div class="a" style="left:0;top:697px;width:54px;height:1px;background:#dadada"></div><div class="a" style="left:55px;top:726px;width:1848px;height:1px;background:#e1e1e1"></div><div class="a" style="left:0;top:726px;width:54px;height:1px;background:#dadada"></div><div class="a" style="left:55px;top:755px;width:1848px;height:1px;background:#e1e1e1"></div><div class="a" style="left:0;top:755px;width:54px;height:1px;background:#dadada"></div><div class="a" style="left:55px;top:784px;width:1848px;height:1px;background:#e1e1e1"></div><div class="a" style="left:0;top:784px;width:54px;height:1px;background:#dadada"></div><div class="a" style="left:55px;top:813px;width:1848px;height:1px;background:#e1e1e1"></div><div class="a" style="left:0;top:813px;width:54px;height:1px;background:#dadada"></div><div class="t" style="left:55px;top:1px;width:115px;height:31px;line-height:31px;text-align:center;font-size:20px;color:#4a4a4a">A</div><div class="t" style="left:170px;top:1px;width:115px;height:31px;line-height:31px;text-align:center;font-size:20px;color:#4a4a4a">B</div><div class="t" style="left:285px;top:1px;width:115px;height:31px;line-height:31px;text-align:center;font-size:20px;color:#4a4a4a">C</div><div class="t" style="left:400px;top:1px;width:115px;height:31px;line-height:31px;text-align:center;font-size:20px;color:#4a4a4a">D</div><div class="t" style="left:515px;top:1px;width:115px;height:31px;line-height:31px;text-align:center;font-size:20px;color:#4a4a4a">E</div><div class="t" style="left:630px;top:1px;width:94px;height:31px;line-height:31px;text-align:center;font-size:20px;color:#4a4a4a">F</div><div class="t" style="left:724px;top:1px;width:94px;height:31px;line-height:31px;text-align:center;font-size:20px;color:#4a4a4a">G</div><div class="t" style="left:818px;top:1px;width:163px;height:31px;line-height:31px;text-align:center;font-size:20px;color:#4a4a4a">H</div><div class="t" style="left:981px;top:1px;width:115px;height:31px;line-height:31px;text-align:center;font-size:20px;color:#4a4a4a">I</div><div class="t" style="left:1096px;top:1px;width:115px;height:31px;line-height:31px;text-align:center;font-size:20px;color:#4a4a4a">J</div><div class="t" style="left:1211px;top:1px;width:115px;height:31px;line-height:31px;text-align:center;font-size:20px;color:#4a4a4a">K</div><div class="t" style="left:1326px;top:1px;width:115px;height:31px;line-height:31px;text-align:center;font-size:20px;color:#4a4a4a">L</div><div class="t" style="left:1441px;top:1px;width:115px;height:31px;line-height:31px;text-align:center;font-size:20px;color:#4a4a4a">M</div><div class="t" style="left:1556px;top:1px;width:115px;height:31px;line-height:31px;text-align:center;font-size:20px;color:#4a4a4a">N</div><div class="t" style="left:1671px;top:1px;width:115px;height:31px;line-height:31px;text-align:center;font-size:20px;color:#4a4a4a">O</div><div class="t" style="left:1786px;top:1px;width:115px;height:31px;line-height:31px;text-align:center;font-size:20px;color:#4a4a4a">P</div><div class="t" style="left:0;top:31px;width:54px;height:29px;line-height:29px;text-align:center;font-size:20px;color:#1f7f80">1</div><div class="t" style="left:0;top:60px;width:54px;height:29px;line-height:29px;text-align:center;font-size:20px;color:#4a4a4a">2</div><div class="t" style="left:0;top:89px;width:54px;height:29px;line-height:29px;text-align:center;font-size:20px;color:#4a4a4a">3</div><div class="t" style="left:0;top:118px;width:54px;height:29px;line-height:29px;text-align:center;font-size:20px;color:#4a4a4a">4</div><div class="t" style="left:0;top:147px;width:54px;height:29px;line-height:29px;text-align:center;font-size:20px;color:#4a4a4a">5</div><div class="t" style="left:0;top:176px;width:54px;height:29px;line-height:29px;text-align:center;font-size:20px;color:#4a4a4a">6</div><div class="t" style="left:0;top:205px;width:54px;height:29px;line-height:29px;text-align:center;font-size:20px;color:#4a4a4a">7</div><div class="t" style="left:0;top:234px;width:54px;height:29px;line-height:29px;text-align:center;font-size:20px;color:#4a4a4a">8</div><div class="t" style="left:0;top:263px;width:54px;height:29px;line-height:29px;text-align:center;font-size:20px;color:#4a4a4a">9</div><div class="t" style="left:0;top:292px;width:54px;height:29px;line-height:29px;text-align:center;font-size:20px;color:#4a4a4a">10</div><div class="t" style="left:0;top:321px;width:54px;height:29px;line-height:29px;text-align:center;font-size:20px;color:#4a4a4a">11</div><div class="t" style="left:0;top:350px;width:54px;height:29px;line-height:29px;text-align:center;font-size:20px;color:#4a4a4a">12</div><div class="t" style="left:0;top:379px;width:54px;height:29px;line-height:29px;text-align:center;font-size:20px;color:#4a4a4a">13</div><div class="t" style="left:0;top:408px;width:54px;height:29px;line-height:29px;text-align:center;font-size:20px;color:#4a4a4a">14</div><div class="t" style="left:0;top:437px;width:54px;height:29px;line-height:29px;text-align:center;font-size:20px;color:#4a4a4a">15</div><div class="t" style="left:0;top:466px;width:54px;height:29px;line-height:29px;text-align:center;font-size:20px;color:#4a4a4a">16</div><div class="t" style="left:0;top:495px;width:54px;height:29px;line-height:29px;text-align:center;font-size:20px;color:#4a4a4a">17</div><div class="t" style="left:0;top:524px;width:54px;height:29px;line-height:29px;text-align:center;font-size:20px;color:#4a4a4a">18</div><div class="t" style="left:0;top:553px;width:54px;height:29px;line-height:29px;text-align:center;font-size:20px;color:#4a4a4a">19</div><div class="t" style="left:0;top:582px;width:54px;height:29px;line-height:29px;text-align:center;font-size:20px;color:#4a4a4a">20</div><div class="t" style="left:0;top:611px;width:54px;height:29px;line-height:29px;text-align:center;font-size:20px;color:#4a4a4a">21</div><div class="t" style="left:0;top:640px;width:54px;height:29px;line-height:29px;text-align:center;font-size:20px;color:#4a4a4a">22</div><div class="t" style="left:0;top:669px;width:54px;height:29px;line-height:29px;text-align:center;font-size:20px;color:#4a4a4a">23</div><div class="t" style="left:0;top:698px;width:54px;height:29px;line-height:29px;text-align:center;font-size:20px;color:#4a4a4a">24</div><div class="t" style="left:0;top:727px;width:54px;height:29px;line-height:29px;text-align:center;font-size:20px;color:#4a4a4a">25</div><div class="t" style="left:0;top:756px;width:54px;height:29px;line-height:29px;text-align:center;font-size:20px;color:#4a4a4a">26</div><div class="t" style="left:0;top:785px;width:54px;height:29px;line-height:29px;text-align:center;font-size:20px;color:#4a4a4a">27</div><svg style="left:24px;top:12px" width="10" height="10"><path d="M9 1 L9 9 L1 9 Z" fill="#777"/></svg><div class="a" style="left:1903px;top:31px;width:17px;height:768px;background:#e9ebef"></div><div class="a" style="left:1908px;top:38px;width:8px;height:2px;background:#aaa"></div><svg style="left:1908px;top:47px" width="8" height="6"><path d="M4 0 L8 5 L0 5Z" fill="#666"/></svg><div class="a" style="left:1908px;top:62px;width:8px;height:675px;border-radius:4px;background:#cfd0d3"></div><svg style="left:1908px;top:785px" width="8" height="6"><path d="M0 0 L8 0 L4 5Z" fill="#666"/></svg><div class="cell" style="left:58px;top:31px">姓名</div><div class="cell" style="left:173px;top:31px">项目</div><div class="cell" style="left:288px;top:31px">数量</div><div class="cell" style="left:58px;top:60px">鱼</div><div class="cell" style="left:173px;top:60px">A</div><div class="cell" style="left:284px;width:112px;text-align:right;top:60px">45</div><div class="cell" style="left:58px;top:89px">木</div><div class="cell" style="left:173px;top:89px">A</div><div class="cell" style="left:284px;width:112px;text-align:right;top:89px">24</div><div class="cell" style="left:58px;top:118px">猪</div><div class="cell" style="left:173px;top:118px">A</div><div class="cell" style="left:284px;width:112px;text-align:right;top:118px">37</div><div class="cell" style="left:58px;top:147px">鱼</div><div class="cell" style="left:173px;top:147px">B</div><div class="cell" style="left:284px;width:112px;text-align:right;top:147px">34</div><div class="cell" style="left:58px;top:176px">木</div><div class="cell" style="left:173px;top:176px">B</div><div class="cell" style="left:284px;width:112px;text-align:right;top:176px">83</div><div class="cell" style="left:58px;top:205px">猪</div><div class="cell" style="left:173px;top:205px">B</div><div class="cell" style="left:284px;width:112px;text-align:right;top:205px">36</div><div class="cell" style="left:58px;top:234px">鱼</div><div class="cell" style="left:173px;top:234px">C</div><div class="cell" style="left:284px;width:112px;text-align:right;top:234px">34</div><div class="cell" style="left:58px;top:263px">木</div><div class="cell" style="left:173px;top:263px">C</div><div class="cell" style="left:284px;width:112px;text-align:right;top:263px">68</div><div class="cell" style="left:58px;top:292px">猪</div><div class="cell" style="left:173px;top:292px">C</div><div class="cell" style="left:284px;width:112px;text-align:right;top:292px">39</div><div class="a" style="left:54px;top:31px;width:2px;height:29px;background:#3a8a1e"></div><div class="a" style="left:630px;top:31px;width:351px;height:406px;background:#fff"></div><div class="a" style="left:630px;top:31px;width:351px;height:29px;background:#d9e1f3"></div><div class="a" style="left:630px;top:408px;width:351px;height:29px;background:#d9e1f3"></div><div class="a" style="left:630px;top:59px;width:351px;height:1px;background:#8eaadb"></div><div class="a" style="left:630px;top:88px;width:351px;height:1px;background:#8eaadb"></div><div class="a" style="left:630px;top:204px;width:351px;height:1px;background:#8eaadb"></div><div class="a" style="left:630px;top:320px;width:351px;height:1px;background:#8eaadb"></div><div class="a" style="left:630px;top:407px;width:351px;height:1px;background:#8eaadb"></div><div class="a" style="left:630px;top:436px;width:351px;height:1px;background:#8eaadb"></div><div class="a" style="left:628px;top:29px;width:97px;height:32px;border:3px solid #3a8a1e"></div><div class="cell" style="left:634px;top:31px;font-weight:bold">姓名</div><div class="cell" style="left:729px;top:31px;font-weight:bold">项目</div><div class="cell" style="left:822px;top:31px;font-weight:bold">求和项<span style="display:inline-block;width:17px;text-align:center">·</span>数量</div><div class="a" style="left:708px;top:44px;width:15px;height:16px;border:1px solid #8a8a8a;border-radius:1px;background:linear-gradient(#f0f0f0,#dcdcdc)"><div class="a" style="left:4px;top:10px;width:6px;height:2px;background:#333"></div></div><div class="a" style="left:802px;top:44px;width:15px;height:16px;border:1px solid #8a8a8a;border-radius:1px;background:linear-gradient(#f0f0f0,#dcdcdc)"><div class="a" style="left:4px;top:10px;width:6px;height:2px;background:#333"></div></div><div class="a" style="left:636px;top:67px;width:16px;height:15px;border:1px solid #a7b3c8;border-radius:3px;background:linear-gradient(#f2f2f2,#d6d6d6)"><div class="a" style="left:3px;top:6px;width:8px;height:1.5px;background:#2b3a67"></div></div><div class="cell" style="left:655px;top:60px">木</div><div class="cell" style="left:655px;top:89px">木</div><div class="cell" style="left:818px;width:159px;text-align:right;top:89px">24</div><div class="cell" style="left:655px;top:118px">木</div><div class="cell" style="left:818px;width:159px;text-align:right;top:118px">107</div><div class="cell" style="left:655px;top:147px">木</div><div class="cell" style="left:818px;width:159px;text-align:right;top:147px">175</div><div class="a" style="left:636px;top:183px;width:16px;height:15px;border:1px solid #a7b3c8;border-radius:3px;background:linear-gradient(#f2f2f2,#d6d6d6)"><div class="a" style="left:3px;top:6px;width:8px;height:1.5px;background:#2b3a67"></div></div><div class="cell" style="left:655px;top:176px">鱼</div><div class="cell" style="left:655px;top:205px">鱼</div><div class="cell" style="left:818px;width:159px;text-align:right;top:205px">45</div><div class="cell" style="left:655px;top:234px">鱼</div><div class="cell" style="left:818px;width:159px;text-align:right;top:234px">79</div><div class="cell" style="left:655px;top:263px">鱼</div><div class="cell" style="left:818px;width:159px;text-align:right;top:263px">113</div><div class="a" style="left:636px;top:299px;width:16px;height:15px;border:1px solid #a7b3c8;border-radius:3px;background:linear-gradient(#f2f2f2,#d6d6d6)"><div class="a" style="left:3px;top:6px;width:8px;height:1.5px;background:#2b3a67"></div></div><div class="cell" style="left:655px;top:292px">猪</div><div class="cell" style="left:655px;top:321px">猪</div><div class="cell" style="left:818px;width:159px;text-align:right;top:321px">37</div><div class="cell" style="left:655px;top:350px">猪</div><div class="cell" style="left:818px;width:159px;text-align:right;top:350px">73</div><div class="cell" style="left:655px;top:379px">猪</div><div class="cell" style="left:818px;width:159px;text-align:right;top:379px">112</div><div class="cell" style="left:634px;top:408px;font-weight:bold">总计</div></div>
<div class="a" style="left:0;top:990px;width:1920px;height:26px;background:#eceef2;border-top:1px solid #d9dbdf"></div>
<div class="a" style="left:0;top:1016px;width:1920px;height:1px;background:#d3d5d9"></div>
<div class="a" style="left:0;top:1017px;width:1920px;height:23px;background:#eceef2"></div>
<div id="ftb" class="a"><div class="a" style="left:7px;top:7px;width:190px;height:24px;border:1px solid #d6d6d6;border-radius:5px"></div><div class="a" style="left:135px;top:7px;width:1px;height:24px;background:#d6d6d6"></div><div class="t" style="left:19px;top:12px;font-size:12px;line-height:16px;color:#333">宋体</div><svg style="left:122px;top:17px" width="9" height="5"><path d="M0.6 0.6L4.5 4.3L8.4 0.6" fill="none" stroke="#555" stroke-width="1"/></svg><div class="t" style="left:147px;top:12px;font-size:12.5px;line-height:16px;color:#333">11</div><svg style="left:182px;top:17px" width="9" height="5"><path d="M0.6 0.6L4.5 4.3L8.4 0.6" fill="none" stroke="#555" stroke-width="1"/></svg><svg style="left:209px;top:12px" width="16" height="14" viewBox="0 0 16 14"><path d="M0.8 13L4.8 2L8.8 13M2.2 9.2H7.4" fill="none" stroke="#333" stroke-width="1.1"/><path d="M11 0.5V6M8.3 3.2H13.8" stroke="#2a5de8" stroke-width="1.1"/></svg><svg style="left:235px;top:12px" width="16" height="14" viewBox="0 0 16 14"><path d="M0.8 13L4.8 2L8.8 13M2.2 9.2H7.4" fill="none" stroke="#333" stroke-width="1.1"/><path d="M7.3 1H14" stroke="#2a5de8" stroke-width="1.1"/></svg><div class="a" style="left:261px;top:9px;width:1px;height:48px;background:#dcdcdc"></div><svg style="left:282px;top:11px" width="21" height="18" viewBox="0 0 21 18"><rect x="0.6" y="0.6" width="19.5" height="16.5" fill="none" stroke="#333" stroke-width="1.2"/><path d="M0.6 6H20M7 0.6V6M13.5 0.6V6" stroke="#333" stroke-width="1.2"/><path d="M3 11.5H17.5" stroke="#1a8a5a" stroke-width="1.2"/></svg><svg style="left:329px;top:11px" width="18" height="19" viewBox="0 0 18 19"><path d="M17 2.5V0.8H0.8L8.5 9.5L0.8 18H17V16.3" fill="none" stroke="#333" stroke-width="1.2" stroke-linejoin="miter"/></svg><div class="t" style="left:275px;top:39px;font-size:12px;line-height:16px;color:#333">合并</div><svg style="left:302px;top:46px" width="7" height="5"><path d="M0.8 0.8L3.5 3.6L6.2 0.8" fill="none" stroke="#333" stroke-width="1.2"/></svg><div class="t" style="left:321px;top:39px;font-size:12px;line-height:16px;color:#333">求和</div><svg style="left:348px;top:46px" width="7" height="5"><path d="M0.8 0.8L3.5 3.6L6.2 0.8" fill="none" stroke="#333" stroke-width="1.2"/></svg><div class="t" style="left:14px;top:38px;font-size:14px;line-height:18px;color:#3a3a3a;font-weight:bold">B</div><svg style="left:40px;top:37px" width="17" height="17" viewBox="0 0 17 17"><path d="M4 7.5L8.5 2.5L12.3 6.3L8 10.5Q6.5 11.5 5 10.2L3.2 8.4Z M6 5.5Q5 2 7 1.2" fill="none" stroke="#333" stroke-width="1.1"/><circle cx="13.2" cy="9.5" r="0.9" fill="#333"/><rect x="0.8" y="12.3" width="15" height="3.6" rx="1.8" fill="#f3ea00" stroke="#c8c000" stroke-width="0.6"/></svg><svg style="left:60px;top:44px" width="7" height="5"><path d="M0.8 0.8L3.5 3.6L6.2 0.8" fill="none" stroke="#333" stroke-width="1.2"/></svg><svg style="left:81px;top:37px" width="17" height="17" viewBox="0 0 17 17"><path d="M4.5 11L8.3 1L12.1 11M5.8 7.8H10.8" fill="none" stroke="#333" stroke-width="1.1"/><rect x="0.8" y="12.3" width="15.5" height="4" rx="2" fill="#e8000b"/></svg><svg style="left:102px;top:44px" width="7" height="5"><path d="M0.8 0.8L3.5 3.6L6.2 0.8" fill="none" stroke="#333" stroke-width="1.2"/></svg><div class="a" style="left:117px;top:34px;width:40px;height:24px;border:1px solid #e0e0e0;border-radius:5px;overflow:hidden"><div class="a" style="left:0;top:0;width:23px;height:24px;background:#e8e8e8;border-right:1px solid #d8d8d8"></div></div><svg style="left:125px;top:42px" width="13" height="9"><path d="M0 4.5H13M2 1.5H11M2 7.5H11" stroke="#333" stroke-width="1"/></svg><svg style="left:144px;top:44px" width="7" height="5"><path d="M0.8 0.8L3.5 3.6L6.2 0.8" fill="none" stroke="#333" stroke-width="1.2"/></svg><svg style="left:166px;top:39px" width="14" height="14"><rect x="0.7" y="0.7" width="12.5" height="12.5" fill="none" stroke="#333" stroke-width="1.2"/><path d="M7 0.7V13.2M0.7 7H13.2" stroke="#333" stroke-width="1.2"/></svg><svg style="left:185px;top:44px" width="7" height="5"><path d="M0.8 0.8L3.5 3.6L6.2 0.8" fill="none" stroke="#333" stroke-width="1.2"/></svg><svg style="left:205px;top:38px" width="17" height="17" viewBox="0 0 17 17"><path d="M6 4.5V2Q6 0.8 8.3 0.8Q10.5 0.8 10.5 2V4.5H15.5Q16 5 15.8 7.5L14.5 7.5L13.8 15.8H8L8.8 12.5M6.5 15.8H1L1.8 7.5H0.8Q0.5 5 1 4.5H6" fill="none" stroke="#333" stroke-width="1.1"/><path d="M2.5 7.5H13.5" stroke="#e0521c" stroke-width="1.1"/></svg><svg style="left:231px;top:39px" width="17" height="16" viewBox="0 0 17 16"><path d="M9 15H0.7V0.7H15.7V8" fill="none" stroke="#333" stroke-width="1.1"/><path d="M3 4.5H12.5M3 8H12.5M3 11.5H7" stroke="#333" stroke-width="1"/><path d="M15.7 9V14.8H11M12.5 13.2L11 14.8L12.5 16" fill="none" stroke="#1a8a5a" stroke-width="1.1"/></svg></div>
<div id="menu" class="a"><div class="cm" style="top:15px">复制(C)</div><div class="sc" style="top:15px">Ctrl+C</div><div class="cm" style="top:51px">设置单元格格式(F)...</div><div class="sc" style="top:51px">Ctrl+1</div><div class="cm" style="top:92px">刷新(R)</div><div class="cm" style="top:133px">排序(S)</div><svg style="left:224px;top:135px" width="8" height="12"><path d="M2 1 L6 6 L2 11" fill="none" stroke="#666" stroke-width="1.2"/></svg><div class="cm" style="top:169px">筛选(T)</div><svg style="left:224px;top:171px" width="8" height="12"><path d="M2 1 L6 6 L2 11" fill="none" stroke="#666" stroke-width="1.2"/></svg><div class="cm" style="top:210px">分类汇总"姓名"(B)</div><div class="cm" style="top:251px">展开/折叠(E)</div><svg style="left:224px;top:253px" width="8" height="12"><path d="M2 1 L6 6 L2 11" fill="none" stroke="#666" stroke-width="1.2"/></svg><div class="cm" style="top:292px">组合(G)...</div><div class="cm" style="top:328px">取消组合(U)...</div><div class="cm" style="top:369px">移动(M)</div><svg style="left:224px;top:371px" width="8" height="12"><path d="M2 1 L6 6 L2 11" fill="none" stroke="#666" stroke-width="1.2"/></svg><div class="cm" style="top:405px">删除"姓名"(V)</div><div class="cm" style="top:446px">字段设置(N)...</div><div class="cm" style="top:482px">数据透视表选项(O)...</div><div class="cm" style="top:518px">显示字段列表(D)</div><div class="sep" style="top:79px"></div><div class="sep" style="top:120px"></div><div class="sep" style="top:197px"></div><div class="sep" style="top:238px"></div><div class="sep" style="top:279px"></div><div class="sep" style="top:356px"></div><div class="sep" style="top:433px"></div><svg style="left:15px;top:15px" width="18" height="18" viewBox="0 0 18 18"><path d="M9.5 3.5V0.6H0.6V11.8H6" fill="none" stroke="#2a5de8" stroke-width="1.1"/><path d="M6.5 15.5V4.2H12.5L16 7.7V15.5Z M12.3 4.2V8H16" fill="none" stroke="#333" stroke-width="1"/></svg><svg style="left:15px;top:51px" width="18" height="18" viewBox="0 0 18 18"><path d="M0 3.5H16M2.5 1V15M0 12.5H7M13.5 1V6" fill="none" stroke="#333" stroke-width="1"/><path d="M12 7.5L15.5 9.5V13.5L12 15.5L8.5 13.5V9.5Z" fill="none" stroke="#333" stroke-width="1"/><circle cx="12" cy="11.5" r="1.7" fill="#5b8cf5"/><path d="M11 11.5H13" stroke="#fff" stroke-width="0.6"/></svg><svg style="left:15px;top:92px" width="18" height="18" viewBox="0 0 18 18"><path d="M6.5 14.5H0.5V1.5H14.5V6.5" fill="none" stroke="#333" stroke-width="1"/><path d="M2.5 12.5V3.5H13V6.5H5.5V12.5Z" fill="none" stroke="#333" stroke-width="1"/><path d="M15.2 12.6A3.6 3.6 0 1 0 15.4 16.8" fill="none" stroke="#1f8a5c" stroke-width="1.3"/><path d="M13.3 11L16.6 10.3L16.2 13.6Z" fill="#1f8a5c"/></svg><svg style="left:15px;top:210px" width="18" height="18" viewBox="0 0 18 18"><path d="M2 9L5.8 13L13.5 4" fill="none" stroke="#444" stroke-width="1.1"/></svg><svg style="left:15px;top:292px" width="18" height="18" viewBox="0 0 18 18"><path d="M7.5 14.5H0.5V0.5H14.5V7.5" fill="none" stroke="#333" stroke-width="1"/><path d="M2.5 11.5V3.5H12.5V7.5H2.5M7.5 3.5V11.5H2.5" fill="none" stroke="#333" stroke-width="1"/><path d="M9.5 8.5L15.5 11L12.5 12L11.5 15.5Z" fill="none" stroke="#333" stroke-width="1"/></svg><svg style="left:15px;top:328px" width="18" height="18" viewBox="0 0 18 18"><path d="M9.5 14.5H0.5V0.5H14.5V10.5" fill="none" stroke="#333" stroke-width="1"/><path d="M2.5 11.5V3.5H12.5V7.5H2.5M7.5 3.5V11.5H2.5" fill="none" stroke="#333" stroke-width="1"/><path d="M11.5 11.5L15 15M11.5 11.5V14M11.5 11.5H14" fill="none" stroke="#333" stroke-width="1"/></svg><svg style="left:15px;top:405px" width="18" height="18" viewBox="0 0 18 18"><path d="M3.5 3.5L14.5 14.5M14.5 3.5L3.5 14.5" fill="none" stroke="#d8425f" stroke-width="1.2"/></svg><svg style="left:15px;top:446px" width="18" height="18" viewBox="0 0 18 18"><path d="M7 15.5H2.5V0.6H12L13.5 2.1V7" fill="none" stroke="#333" stroke-width="1"/><path d="M4.5 4H9M4.5 7H7" fill="none" stroke="#333" stroke-width="1"/><path d="M11.5 9L14.3 10.6V13.8L11.5 15.4L8.7 13.8V10.6Z" fill="none" stroke="#333" stroke-width="1"/><circle cx="11.5" cy="12.2" r="1.2" fill="none" stroke="#333" stroke-width="0.9"/></svg><svg style="left:15px;top:482px" width="18" height="18" viewBox="0 0 18 18"><rect x="0.5" y="2.5" width="15" height="14" rx="1" fill="none" stroke="#333" stroke-width="1"/><path d="M2.5 14.5V4.5H13.5V7.5H5.5V14.5Z" fill="none" stroke="#333" stroke-width="1"/><path d="M8.5 9V15M11.5 9V15M7 10.5H13.5M7 13.5H13.5" stroke="#1f8a5c" stroke-width="1.2"/></svg><svg style="left:15px;top:518px" width="18" height="18" viewBox="0 0 18 18"><path d="M1.5 1.5H7M1.5 1.5V16.5M1.5 16.5H7M3.5 5H6M3.5 8.5H6M3.5 12H6" fill="none" stroke="#c4c4c4" stroke-width="1" stroke-dasharray="1.5 1"/><path d="M8.5 1.5H14.5V16.5H8.5" fill="none" stroke="#333" stroke-width="1"/><path d="M10.5 4.5H12.5V8.5H10.5M10.5 11.5H12.5" fill="none" stroke="#333" stroke-width="1"/><path d="M8.5 0V18" stroke="#1f8a5c" stroke-width="1.3"/></svg></div>
<svg style="left:0;top:0" width="1920" height="1040"><defs><filter id="sh" x="-20%" y="-50%" width="140%" height="200%"><feGaussianBlur stdDeviation="1.3"/></filter></defs><g opacity="0.45" filter="url(#sh)" transform="translate(2,2.2)"><path d="M889 724.5 L810 752" stroke="#000" stroke-width="3.6" stroke-linecap="round"/><path d="M788.7 760 L810.6 746.2 L810 751.9 L814.7 757.5 Z" fill="#000"/></g><path d="M889 724.5 L810 752" stroke="#fa0000" stroke-width="3.6" stroke-linecap="round"/><path d="M788.7 760 L810.6 746.2 L810 751.9 L814.7 757.5 Z" fill="#fa0000" stroke="#fa0000" stroke-width="0.8" stroke-linejoin="round"/></svg>
<svg style="left:14px;top:998px" width="80" height="12"><path d="M1.5 1V11M9 1.5L4.5 6L9 10.5" fill="none" stroke="#999" stroke-width="1.2"/><path d="M28 1.5L23.5 6L28 10.5" fill="none" stroke="#999" stroke-width="1.2"/><path d="M47 1.5L51.5 6L47 10.5" fill="none" stroke="#999" stroke-width="1.2"/><path d="M66 1.5L70.5 6L66 10.5M74.5 1V11" fill="none" stroke="#999" stroke-width="1.2"/></svg><div class="a" style="left:101px;top:990px;width:82px;height:24px;background:#fff;border-radius:0 0 6px 6px;box-shadow:0 0.5px 1px rgba(0,0,0,.15)"></div><div class="t" style="left:114px;top:993px;font-size:17px;line-height:20px;color:#0f7a70;font-weight:bold">Sheet1</div><svg style="left:189px;top:999px" width="12" height="12"><path d="M6 1V11M1 6H11" stroke="#222" stroke-width="1.6"/></svg><div class="a" style="left:1137px;top:998px;width:1px;height:9px;background:#999"></div><svg style="left:1150px;top:999px" width="6" height="8"><path d="M5 0L0 4L5 8Z" fill="#555"/></svg><div class="a" style="left:1165px;top:998px;width:630px;height:9px;border-radius:4.5px;background:#cdcfd3"></div><svg style="left:17px;top:1021px" width="15" height="13" viewBox="0 0 15 13"><text x="0" y="5.5" font-size="6" font-family="Liberation Sans" font-weight="bold" fill="#333">VB</text><path d="M9.5 1H13.5V3H11.5V12H1.5V9H9.5" fill="none" stroke="#333" stroke-width="1"/></svg><svg style="left:1447px;top:1021px" width="17" height="12" viewBox="0 0 17 12"><path d="M0.8 6Q8.5 -2.5 16.2 6Q8.5 14.5 0.8 6Z" fill="none" stroke="#333" stroke-width="1.2"/><circle cx="8.5" cy="6" r="2.6" fill="none" stroke="#333" stroke-width="1.2"/></svg><svg style="left:1483px;top:1019px" width="15" height="16" viewBox="0 0 15 16"><path d="M5 1H10V5H14V11H10V15H5V11H1V5H5Z" fill="none" stroke="#333" stroke-width="1.1"/><path d="M7.5 4V12M4 8H11" stroke="#333" stroke-width="1"/></svg><svg style="left:1501px;top:1025px" width="7" height="5"><path d="M0.8 0.8L3.5 3.6L6.2 0.8" fill="none" stroke="#333" stroke-width="1.2"/></svg><div class="a" style="left:1522px;top:1019px;width:1px;height:17px;background:#cfd1d5"></div><div class="a" style="left:1532px;top:1017px;width:25px;height:23px;border-radius:4px;background:#dcdee2"></div><svg style="left:1537px;top:1021px" width="15" height="15"><rect x="0.6" y="0.6" width="13.5" height="13.5" fill="none" stroke="#333" stroke-width="1.2"/><path d="M0.6 4.5H14M4.5 4.5V14" stroke="#333" stroke-width="1.1"/></svg><svg style="left:1569px;top:1021px" width="15" height="15"><rect x="0.6" y="0.6" width="13.5" height="13.5" fill="none" stroke="#333" stroke-width="1.2"/><path d="M7.3 0.6V14" stroke="#333" stroke-width="1.1"/></svg><svg style="left:1600px;top:1021px" width="15" height="15"><path d="M0.6 0.6H14V14H0.6Z" fill="none" stroke="#333" stroke-width="1.2"/><path d="M0.6 10H10V0.6" stroke="#333" stroke-width="1.1" fill="none"/></svg><div class="a" style="left:1630px;top:1019px;width:1px;height:17px;background:#cfd1d5"></div><div class="t" style="left:1643px;top:1020px;font-size:13px;line-height:16px;color:#333">160%</div><svg style="left:1686px;top:1026px" width="7" height="5"><path d="M0.8 0.8L3.5 3.6L6.2 0.8" fill="none" stroke="#333" stroke-width="1.2"/></svg><div class="a" style="left:1712px;top:1027px;width:12px;height:2px;background:#222"></div><div class="a" style="left:1740px;top:1027px;width:62px;height:2px;background:#2a5de8"></div><div class="a" style="left:1802px;top:1027px;width:50px;height:1px;background:#999"></div><div class="a" style="left:1795px;top:1023px;width:10px;height:10px;border-radius:5px;background:#9a9a9a;border:2px solid #fff;box-shadow:0 0 1px rgba(0,0,0,.4)"></div><svg style="left:1858px;top:1022px" width="12" height="12"><path d="M6 0V12M0 6H12" stroke="#222" stroke-width="1.6"/></svg><svg style="left:1890px;top:1021px" width="14" height="14"><path d="M1 5V1H5M9 1H13V5M13 9V13H9M5 13H1V9M3 11L11 3" fill="none" stroke="#333" stroke-width="1.1"/></svg>
<svg style="left:1758px;top:988px" width="50" height="44" viewBox="0 0 50 44"><defs><linearGradient id="wb" x1="0" y1="0" x2="1" y2="0"><stop offset="0" stop-color="#3f86d2"/><stop offset="1" stop-color="#62c3f0"/></linearGradient><linearGradient id="wg" x1="0" y1="1" x2="1" y2="0"><stop offset="0" stop-color="#d8e84a"/><stop offset="0.5" stop-color="#5ec27a"/><stop offset="1" stop-color="#49b46d"/></linearGradient></defs><path d="M46 1.5 C28 2 8 12 4 26 C1.5 35 8 41 17 39 C9 38 6 31 10 24 C15 14 30 6 46 1.5Z" fill="url(#wb)" opacity="0.92"/><path d="M13 30 C12 24 18 20 24 20 C19 22 16 26 18 29 C19 31 15 32 13 30Z" fill="#4a8fd6" opacity="0.9"/><path d="M17 39.5 C30 38 42 30 42 22 C42 16 35 13 27 17 C34 15 38 19 35 25 C31 32 22 36 17 39.5Z" fill="url(#wg)" opacity="0.92"/></svg><div class="t" style="left:1803px;top:989px;font-size:21px;line-height:26px;color:#5b97d4;font-weight:bold;letter-spacing:0.2px">极光下载站</div><div class="t" style="left:1804px;top:1013px;font-size:16px;line-height:20px;color:#5cbf78;font-weight:bold;letter-spacing:0.3px">www.xz7.com</div>
</body></html>
